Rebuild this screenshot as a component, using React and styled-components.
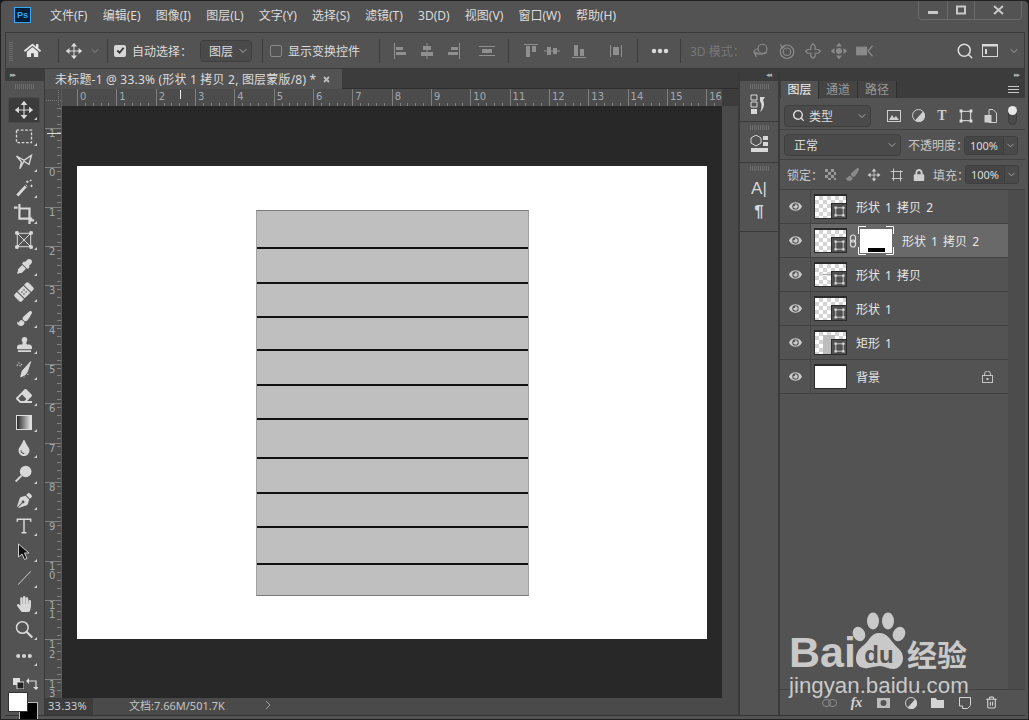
import React from 'react';
import styled, { createGlobalStyle } from 'styled-components';
import {
  FaHome, FaEyeDropper, FaBandAid, FaPaintBrush, FaStamp, FaEraser, FaTint,
  FaPenNib, FaHandPaper, FaEye, FaLock,
} from 'react-icons/fa';
import { Search, ChevronDown, Trash2 } from 'lucide-react';

const INCH = 39.33;

const Global = createGlobalStyle`
  html, body { margin: 0; padding: 0; background: #1a1a1a; overflow: hidden; }
  * { box-sizing: border-box; }
`;

const Window = styled.div`
  position: relative;
  width: 1029px;
  height: 720px;
  display: flex;
  flex-direction: column;
  overflow: hidden;
  background: #535353;
  border: 1px solid #222;
  border-radius: 5px 5px 0 0;
  font-family: "Noto Sans", "Noto Sans CJK SC", sans-serif;
  font-size: 12px;
  color: #dcdcdc;
`;

const TitleBar = styled.div`
  height: 31px;
  flex: none;
  display: flex;
  align-items: flex-start;
  padding-left: 13px;
`;

const PsLogo = styled.div`
  width: 17px;
  height: 16px;
  margin-top: 6px;
  margin-right: 19px;
  border: 1px solid #31a8ff;
  background: #001e36;
  color: #31a8ff;
  font: 700 9px/14px "Liberation Sans", sans-serif;
  text-align: center;
`;

const Menu = styled.nav`
  display: flex;
  gap: 15.2px;
  line-height: 30px;
`;

const WinControls = styled.div`
  display: flex;
  margin-left: auto;
  margin-right: 6px;
  height: 20px;
  margin-top: -1px;
  border: 1px solid #6a6a6a;
  border-top: none;
  border-radius: 0 0 4px 4px;
`;

const WinBtn = styled.div`
  width: ${(p) => p.$w}px;
  display: flex;
  align-items: center;
  justify-content: center;
  border-left: ${(p) => (p.$first ? 'none' : '1px solid #6a6a6a')};
`;

const OptionsBar = styled.div`
  height: 37px;
  flex: none;
  display: flex;
  align-items: center;
  margin: 0 3px 0 4px;
  border: 1px solid #3a3a3a;
`;

const OptGroup = styled.div`
  width: ${(p) => p.$w}px;
  height: 100%;
  flex: none;
  display: flex;
  align-items: center;
  padding-left: ${(p) => p.$pl || 0}px;
  gap: ${(p) => p.$gap || 0}px;
  color: ${(p) => (p.$muted ? '#777' : 'inherit')};
`;

const OptDivider = styled.div`
  width: 1px;
  height: 24px;
  flex: none;
  background: #3c3c3c;
`;

const Grip = styled.div`
  width: 4px;
  height: 20px;
  margin-right: 11px;
  background: repeating-linear-gradient(0deg, #6a6a6a 0 1px, transparent 1px 2px);
`;

const Check = styled.span`
  width: 12px;
  height: 12px;
  flex: none;
  display: inline-flex;
  align-items: center;
  justify-content: center;
  border-radius: 2px;
  background: ${(p) => (p.$on ? '#d6d6d6' : 'transparent')};
  border: ${(p) => (p.$on ? 'none' : '1px solid #8a8a8a')};
`;

const FixedLabel = styled.span`
  width: ${(p) => p.$w}px;
  flex: none;
  margin: ${(p) => p.$m || '0'};
  white-space: nowrap;
  color: ${(p) => p.$c || 'inherit'};
`;

const AlignSlot = styled.span`
  display: flex;
  flex: none;
  margin-left: ${(p) => p.$ml || 0}px;
`;

const SelectBox = styled.div`
  position: relative;
  width: ${(p) => p.$w}px;
  height: ${(p) => p.$h || 22}px;
  flex: none;
  display: flex;
  align-items: center;
  padding-left: ${(p) => p.$pl || 9}px;
  border: 1px solid #3f3f3f;
  border-radius: 4px;
  background: #4a4a4a;
  gap: 4px;
`;

const Caret = styled(ChevronDown)`
  position: absolute;
  right: 2px;
  top: 50%;
  margin-top: -6px;
  color: #a8a8a8;
`;

const Main = styled.div`
  flex: 1;
  min-height: 0;
  display: flex;
  margin: 0 3px 3px 4px;
  background: #3a3a3a;
  border-bottom: 1px solid #333;
`;

const ToolsCol = styled.aside`
  width: 40px;
  flex: none;
  display: flex;
  flex-direction: column;
  background: #535353;
  border-right: 1px solid #3a3a3a;
`;

const CollapseHead = styled.div`
  height: 12px;
  flex: none;
  background: #3c3c3c;
  display: flex;
  align-items: center;
  justify-content: ${(p) => (p.$between ? 'space-between' : 'flex-start')};
  padding: 0 ${(p) => p.$pr || 4}px 0 ${(p) => p.$pl || 5}px;
  color: #b0b0b0;
  font: 700 7px/12px "DejaVu Sans", sans-serif;
  letter-spacing: -1px;
`;

const ToolGrip = styled.div`
  height: 5px;
  width: 19px;
  flex: none;
  margin: 3px auto 8px;
  background: repeating-linear-gradient(90deg, #6c6c6c 0 1px, transparent 1px 2px);
`;

const ToolBtn = styled.div`
  position: relative;
  height: 26px;
  width: 32px;
  flex: none;
  margin-left: 3px;
  display: flex;
  align-items: center;
  justify-content: center;
  color: #d8d8d8;
  border-radius: 3px;
  background: ${(p) => (p.$active ? '#3b3b3b' : 'transparent')};
  box-shadow: ${(p) => (p.$active ? 'inset 0 0 0 1px #4a4a4a' : 'none')};
  &::after {
    content: '';
    position: absolute;
    right: 3px;
    bottom: 3px;
    border-left: 3px solid transparent;
    border-bottom: 3px solid #cfcfcf;
  }
`;

const SwatchRow = styled.div`
  display: flex;
  justify-content: space-between;
  padding: 8px 6px 0 8px;
  height: 22px;
  flex: none;
  margin-top: 1px;
`;

const Swatches = styled.div`
  position: relative;
  height: 30px;
  margin-left: 3px;
  flex: none;
`;

const Swatch = styled.div`
  position: absolute;
  left: ${(p) => p.$x}px;
  top: ${(p) => p.$y}px;
  width: ${(p) => p.$s}px;
  height: ${(p) => p.$s}px;
  background: ${(p) => p.$c};
  border: 1px solid ${(p) => (p.$c === '#fff' ? '#333' : '#bbb')};
  z-index: ${(p) => (p.$c === '#fff' ? 2 : 1)};
`;

const DocArea = styled.section`
  width: 693px;
  flex: none;
  display: flex;
  flex-direction: column;
  background: #3c3c3c;
`;

const TabStrip = styled.div`
  height: 20px;
  flex: none;
  display: flex;
  background: #3c3c3c;
  border-bottom: 1px solid #2e2e2e;
`;

const DocTab = styled.div`
  width: 297px;
  height: 20px;
  display: flex;
  align-items: center;
  padding-left: 10px;
  gap: 7px;
  white-space: pre;
  letter-spacing: 0.2px;
  background: #535353;
`;

const RulerRow = styled.div`
  height: 17px;
  flex: none;
  display: flex;
`;

const RulerCorner = styled.div`
  width: 17px;
  flex: none;
  background-color: #4c4c4c;
  background-image:
    repeating-linear-gradient(90deg, #7c7c7c 0 1px, transparent 1px 2px),
    repeating-linear-gradient(0deg, #7c7c7c 0 1px, transparent 1px 2px);
  background-size: 15px 1px, 1px 15px;
  background-position: 1px 11px, 13px 1px;
  background-repeat: no-repeat;
  border-right: 1px solid #5c5c5c;
`;

const HRuler = styled.div`
  position: relative;
  width: 660px;
  flex: none;
  display: flex;
  overflow: hidden;
  padding-left: 15px;
  background-color: #4c4c4c;
  background-image:
    repeating-linear-gradient(90deg, #808080 0 1px, transparent 1px ${INCH}px),
    repeating-linear-gradient(90deg, #808080 0 1px, transparent 1px ${INCH / 5}px);
  background-size: 100% 100%, 100% 3px;
  background-position: 15px 0, 15px bottom;
  background-repeat: no-repeat;
  font: 10px/16px "DejaVu Sans", sans-serif;
  color: #a3a9b0;
`;

const HTick = styled.span`
  width: ${INCH}px;
  flex: none;
  padding-left: 3px;
`;

const RulerMark = styled.div`
  position: absolute;
  left: 118px;
  top: 1px;
  width: 1px;
  height: 9px;
  background: #eee;
`;

const Body = styled.div`
  flex: 1;
  min-height: 0;
  display: flex;
`;

const VRuler = styled.div`
  position: relative;
  width: 17px;
  flex: none;
  padding-top: 22px;
  overflow: hidden;
  background-color: #4c4c4c;
  border-right: 1px solid #5c5c5c;
  background-image:
    repeating-linear-gradient(0deg, transparent 0 ${INCH / 5 - 1}px, #808080 ${INCH / 5 - 1}px ${INCH / 5}px),
    repeating-linear-gradient(180deg, #808080 0 1px, transparent 1px ${INCH}px);
  background-size: 4px 100%, 100% 100%;
  background-position: right 0, 0 22px;
  background-repeat: no-repeat;
  font: 10px/9.5px "DejaVu Sans", sans-serif;
  color: #a3a9b0;
`;

const VTick = styled.div`
  height: ${INCH}px;
  padding: 1px 0 0 4px;
  white-space: pre;
`;

const VMark = styled.div`
  position: absolute;
  left: 2px;
  top: 27px;
  width: 14px;
  height: 1px;
  background: #ddd;
`;

const Workspace = styled.main`
  width: 660px;
  flex: none;
  padding: 60px 0 0 15px;
  background: #282828;
`;

const Artboard = styled.div`
  width: 630px;
  height: 473px;
  padding: 44px 0 0 179px;
  background: #fff;
`;

const Sheet = styled.div`
  width: 273px;
  display: flex;
  flex-direction: column;
  border-top: 1px solid #7a7a7a;
  border-left: 1px solid #a0a0a0;
  border-right: 1px solid #a0a0a0;
  border-bottom: 1px solid #7a7a7a;
`;

const Slat = styled.div`
  height: ${(p) => p.$h}px;
  background: #bfbfbf;
  border-bottom: ${(p) => (p.$last ? 'none' : '2px solid #111')};
`;

const ScrollTrack = styled.div`
  flex: 1;
  background: #4a4a4a;
`;

const StatusBar = styled.footer`
  height: 17px;
  flex: none;
  display: flex;
  background: #4a4a4a;
  line-height: 16px;
  font-size: 11px;
`;

const Zoom = styled.div`
  width: 48px;
  padding-left: 3px;
  letter-spacing: 0.3px;
  background: #3c3c3c;
  color: #d0d0d0;
`;

const DocInfo = styled.div`
  width: 172px;
  padding-left: 36px;
  color: #c4c4c4;
`;

const ChevronCell = styled.div`
  width: 45px;
  color: #999;
`;

const Dock = styled.div`
  width: 38px;
  flex: none;
  margin-left: 2px;
  display: flex;
  flex-direction: column;
  background: #535353;
`;

const DockSection = styled.div`
  height: ${(p) => p.$h}px;
  flex: none;
  display: flex;
  flex-direction: column;
  align-items: center;
  gap: ${(p) => p.$gap || 0}px;
  border-bottom: 1px solid #3a3a3a;
  color: #d8d8d8;
`;

const DockGrip = styled(ToolGrip)`
  margin: 3px auto 5px;
`;

const DockGlyph = styled.span`
  font: ${(p) => p.$weight || 400} 17px/20px "Liberation Sans", sans-serif;
  color: #d8d8d8;
`;

const Panel = styled.div`
  flex: 1;
  margin-left: 2px;
  display: flex;
  flex-direction: column;
  background: #535353;
`;

const Tabs = styled.div`
  height: 17px;
  flex: none;
  display: flex;
  background: #3c3c3c;
  padding-left: 1px;
  position: relative;
`;

const Tab = styled.div`
  width: ${(p) => p.$w}px;
  height: ${(p) => (p.$active ? 18 : 17)}px;
  text-align: center;
  line-height: 17px;
  color: ${(p) => (p.$active ? '#f0f0f0' : '#9a9a9a')};
  background: ${(p) => (p.$active ? '#535353' : '#444')};
  border-right: 1px solid #2f2f2f;
  z-index: 1;
`;

const PanelMenu = styled.div`
  position: absolute;
  right: 6px;
  top: 5px;
  width: 11px;
  height: 8px;
  background: repeating-linear-gradient(180deg, #c8c8c8 0 1px, transparent 1px 3px);
`;

const PanelRow = styled.div`
  height: ${(p) => p.$h}px;
  flex: none;
  display: flex;
  align-items: center;
  padding: ${(p) => p.$pt || 0}px 5px 0 4px;
  border-bottom: 1px solid #414141;
`;

const IconSlot = styled.span`
  width: ${(p) => p.$w}px;
  flex: none;
  display: flex;
  justify-content: center;
  margin-left: ${(p) => p.$ml || 0}px;
  color: ${(p) => (p.$dim ? '#8a8a8a' : '#cfcfcf')};
`;

const SerifT = styled.span`
  font: 700 14px/14px "Liberation Serif", serif;
`;

const Toggle = styled.div`
  position: relative;
  width: 9px;
  height: 19px;
  margin-left: 6px;
  border: 1px solid #3d3d3d;
  border-radius: 5px;
  background: #4a4a4a;
  &::before {
    content: '';
    position: absolute;
    left: -1px;
    top: -1px;
    width: 9px;
    height: 9px;
    border-radius: 50%;
    background: #e8e8e8;
  }
`;

const NumBox = styled.div`
  width: 54px;
  height: 19px;
  flex: none;
  display: flex;
  margin-left: 5px;
  border: 1px solid #3f3f3f;
  border-radius: 3px;
  background: #4a4a4a;
  font-size: 11px;
  line-height: 17px;
`;

const NumValue = styled.span`
  width: 39px;
  text-align: center;
  background: #454545;
  border-right: 1px solid #3f3f3f;
`;

const NumCaret = styled.span`
  flex: 1;
  display: flex;
  align-items: center;
  justify-content: center;
  color: #a8a8a8;
`;

const Layers = styled.div`
  flex: 1;
  min-height: 0;
  display: flex;
`;

const LayerList = styled.div`
  width: 228px;
  flex: none;
  display: flex;
  flex-direction: column;
`;

const LayerRow = styled.div`
  height: 34px;
  flex: none;
  display: flex;
  align-items: center;
  border-bottom: 1px solid #414141;
`;

const EyeCell = styled.div`
  width: 31px;
  height: 100%;
  flex: none;
  display: flex;
  align-items: center;
  justify-content: center;
  border-right: 1px solid #464646;
  color: #c9c9c9;
`;

const LayerBody = styled.div`
  flex: 1;
  height: 100%;
  display: flex;
  align-items: center;
  padding-left: 3px;
  background: ${(p) => (p.$selected ? '#696969' : 'transparent')};
`;

const Thumb = styled.div`
  position: relative;
  width: 33px;
  height: 25px;
  flex: none;
  border-top: 2px solid #2b2b2b;
  border-left: 1px solid #2b2b2b;
  border-bottom: 1px solid #2b2b2b;
  border-right: 1px solid #2b2b2b;
  background: ${(p) => (p.$plain
    ? '#fff'
    : 'conic-gradient(#d4d4d4 25%, #fff 0 50%, #d4d4d4 0 75%, #fff 0) 0 0 / 8px 8px')};
`;

const ThumbShape = styled.div`
  position: absolute;
  left: 8px;
  top: 3px;
  width: 12px;
  height: 19px;
  background: #bdbdbd;
`;

const ThumbLine = styled.div`
  position: absolute;
  left: 8px;
  top: 10px;
  width: 22px;
  height: 1px;
  background: #a8a8a8;
`;

const ThumbBadge = styled.div`
  position: absolute;
  right: 0;
  bottom: 0;
  width: 15px;
  height: 15px;
  display: flex;
  align-items: center;
  justify-content: center;
  background: #505050;
  border-top: 1px solid #2b2b2b;
  border-left: 1px solid #2b2b2b;
`;

const LayerName = styled.span`
  margin-left: ${(p) => p.$ml || 9}px;
  white-space: pre;
  word-spacing: 2px;
  color: #e6e6e6;
  font-size: 12px;
`;

const MaskFrame = styled.div`
  position: relative;
  width: 36px;
  height: 29px;
  flex: none;
  margin-left: 1px;
  padding: 3px 2px 2px;
`;

const MaskCorners = styled.svg`
  position: absolute;
  left: 0;
  top: 0;
`;

const MaskFill = styled.div`
  width: 100%;
  height: 100%;
  display: flex;
  align-items: flex-end;
  justify-content: center;
  background: #fff;
`;

const MaskBar = styled.div`
  width: 17px;
  height: 4px;
  margin-bottom: 1px;
  background: #000;
`;

const LayerLock = styled.div`
  margin-left: auto;
  margin-right: 15px;
  color: #c4c4c4;
  display: flex;
`;

const LayersGutter = styled.div`
  flex: 1;
  background: #4c4c4c;
`;

const PanelFooter = styled.div`
  height: 26px;
  flex: none;
  display: flex;
  align-items: center;
  padding-left: 36px;
  border-top: 1px solid #414141;
  color: #d4d4d4;
`;

const FooterIcon = styled.span`
  width: 27px;
  flex: none;
  display: flex;
  justify-content: center;
  color: ${(p) => (p.$dim ? '#8a8a8a' : 'inherit')};
  font: italic 700 14px/16px "Liberation Serif", serif;
`;

const Watermark = styled.div`
  position: absolute;
  left: 788px;
  top: 608px;
  width: 190px;
  pointer-events: none;
  color: #c9c9c9;
`;

const MarkTop = styled.div`
  display: flex;
  align-items: flex-end;
  height: 62px;
`;

const MarkBai = styled.span`
  font: 700 43px/38px "Liberation Sans", sans-serif;
  width: 63px;
  flex: none;
`;

const MarkPaw = styled.svg`
  flex: none;
`;

const MarkCn = styled.span`
  font: 700 30px/36px "Noto Sans CJK SC", sans-serif;
  margin-left: 1px;
  white-space: nowrap;
`;

const MarkUrl = styled.div`
  font: 22.3px/24px "Liberation Sans", sans-serif;
  white-space: nowrap;
  margin-top: 3px;
`;

const I = ({ s = 20, vb = 24, children, fill = 'none', stroke = 'currentColor', sw = 1.6 }) => (
  <svg width={s} height={s} viewBox={`0 0 ${vb} ${vb}`} fill={fill} stroke={stroke} strokeWidth={sw}>
    {children}
  </svg>
);

const MoveGlyph = ({ s = 20 }) => (
  <I s={s} sw={1.4}>
    <path d="M12 4v16M4 12h16" />
    <path d="M12 1l4 5H8zM12 23l-4-5h8zM1 12l5-4v8zM23 12l-5 4V8z" fill="currentColor" stroke="none" />
  </I>
);

const Align = ({ d }) => (
  <svg width="18" height="18" viewBox="0 0 18 18" fill="#8f8f8f" stroke="none"><path d={d} /></svg>
);

const ALIGN = [
  { d: 'M2 1h1v16H2zM4 5h7v3H4zM4 10h10v3H4z', ml: 0 },
  { d: 'M8.5 1h1v16h-1zM5 4h8v4H5zM3 10h12v4H3z', ml: 8 },
  { d: 'M15 1h1v16h-1zM7 5h7v3H7zM4 10h10v3H4z', ml: 8 },
  { d: 'M1 4h16v1H1zM4 7h10v4H4zM1 13h16v1H1z', ml: 16 },
];
const DIST = [
  { d: 'M2 2h14v1H2zM4 4h4v11H4zM10 4h4v6h-4z', ml: 0 },
  { d: 'M1 8.5h16v1H1zM4 5h4v8H4zM10 6h4v6h-4z', ml: 3 },
  { d: 'M2 15h14v1H2zM4 3h4v11H4zM10 7h4v7h-4z', ml: 9 },
  { d: 'M3 3h1v12H3zM14 3h1v12h-1zM6 5h6v8H6z', ml: 19 },
];

const TOOLS = [
  <MoveGlyph key="move" />,
  <I s={20}><rect x="3" y="5" width="18" height="15" strokeDasharray="3.2 2" /></I>,
  <I s={20}><path d="M3 5l9 5 9-6-3 11-6-4-5 9 2-8z" /></I>,
  <I s={20} sw={1.2}><path d="M4 21L14 10" strokeWidth="3.4" /><path d="M16 3v3M14.5 4.5h3M21 8v3M19.5 9.5h3M20 2v2M19 3h2M14 8l2 2" /></I>,
  <I s={22} sw={2.4}><path d="M1 5h4M7 1v16h14M7 6h11v17M18 19h5" /></I>,
  <I s={20} sw={1.2}><path d="M4 4h16v16H4zM4 4l16 16M20 4L4 20" /><path d="M2 2h3v3H2zM19 2h3v3h-3zM2 19h3v3H2zM19 19h3v3h-3z" fill="currentColor" /></I>,
  <FaEyeDropper key="dr" size={15} />,
  <FaBandAid key="ba" size={20} style={{ transform: 'rotate(-45deg)' }} />,
  <FaPaintBrush key="br" size={15} />,
  <FaStamp key="st" size={15} />,
  <I s={20} sw={1.2}><path d="M20 2L10 13l-2 7c4-1 7-3 8-6z" fill="currentColor" /><path d="M3 6l5 1M5 3l5 3M16 18l2-2M12 21l1-1" strokeDasharray="2 1.5" /></I>,
  <FaEraser key="er" size={16} />,
  <svg key="gr" width="16" height="15" viewBox="0 0 16 15"><defs><linearGradient id="gr" x1="0" x2="1"><stop offset="0" stopColor="#222" /><stop offset="1" stopColor="#eee" /></linearGradient></defs><rect x=".5" y=".5" width="15" height="14" fill="url(#gr)" stroke="#ddd" /></svg>,
  <FaTint key="ti" size={16} />,
  <I s={20} fill="none"><circle cx="14" cy="9" r="7" fill="currentColor" stroke="none" /><path d="M9 14l-7 7" strokeWidth="2.2" /></I>,
  <FaPenNib key="pn" size={15} />,
  <I s={20} sw={1.8}><path d="M4 7V4h16v3M12 4v16M9 20h6" /></I>,
  <svg key="mp" width="14" height="18" viewBox="0 0 14 18"><path d="M1.5 1v13l3.5-3 2.5 5.5 2.5-1L7.5 10H12z" fill="#111" stroke="#ccc" strokeWidth="1" /></svg>,
  <I s={20} sw={1.1}><path d="M5 20L20 4" /></I>,
  <FaHandPaper key="hp" size={16} />,
  <I s={20} sw={1.8}><circle cx="10" cy="9" r="7" /><path d="M15 14l7 7" strokeWidth="2.6" /></I>,
  <I s={20} fill="currentColor" stroke="none"><circle cx="5" cy="12" r="2.4" /><circle cx="12" cy="12" r="2.4" /><circle cx="19" cy="12" r="2.4" /></I>,
];

const Handles = ({ s = 11 }) => (
  <I s={s} sw={1.8} stroke="#dcdcdc">
    <rect x="4" y="4" width="16" height="16" />
    <path d="M1 1h5v5H1zM18 1h5v5h-5zM1 18h5v5H1zM18 18h5v5h-5z" fill="#dcdcdc" stroke="none" />
  </I>
);

const Lockish = () => (
  <svg width="11" height="12" viewBox="0 0 11 12">
    <rect x=".5" y="4.5" width="10" height="7" fill="none" stroke="#c4c4c4" />
    <path d="M2.5 4.5V3a3 3 0 0 1 6 0v1.5" fill="none" stroke="#c4c4c4" />
    <rect x="4.5" y="7" width="2" height="2" fill="#c4c4c4" />
  </svg>
);

const LAYERS = [
  { name: '形状 1 拷贝 2' },
  { name: '形状 1 拷贝 2', selected: true },
  { name: '形状 1 拷贝', line: true },
  { name: '形状 1' },
  { name: '矩形 1', bar: true },
  { name: '背景', plain: true },
];

const MENU = ['文件(F)', '编辑(E)', '图像(I)', '图层(L)', '文字(Y)', '选择(S)', '滤镜(T)', '3D(D)', '视图(V)', '窗口(W)', '帮助(H)'];
const SLATS = [38, 35, 34, 33, 35, 34, 39, 35, 34, 37, 30];
const V_LABELS = ['1', '0', '1', '2', '3', '4', '5', '6', '7', '8', '9', '1\n0', '1\n1', '1\n2', '1\n3'];

export default function App() {
  return (
    <>
      <Global />
      <Window>
        <TitleBar>
          <PsLogo>Ps</PsLogo>
          <Menu>{MENU.map((m) => <span key={m}>{m}</span>)}</Menu>
          <WinControls>
            <WinBtn $w={28} $first><svg width="10" height="10" viewBox="0 0 10 10"><rect y="6" width="10" height="3" fill="#c8c8c8" /></svg></WinBtn>
            <WinBtn $w={27}><svg width="10" height="10" viewBox="0 0 10 10"><rect x="1" y="1.5" width="8" height="7" fill="none" stroke="#c8c8c8" strokeWidth="2" /></svg></WinBtn>
            <WinBtn $w={47}><svg width="11" height="10" viewBox="0 0 11 10"><path d="M1 1l9 8M10 1l-9 8" stroke="#c8c8c8" strokeWidth="2" /></svg></WinBtn>
          </WinControls>
        </TitleBar>

        <OptionsBar>
          <OptGroup $w={52} $pl={3}>
            <Grip />
            <FaHome size={17} color="#e4e4e4" />
          </OptGroup>
          <OptDivider />
          <OptGroup $w={48} $pl={6} $gap={6}>
            <MoveGlyph s={18} />
            <ChevronDown size={12} color="#8c8c8c" />
          </OptGroup>
          <OptDivider />
          <OptGroup $w={154} $pl={6}>
            <Check $on>
              <svg width="9" height="9" viewBox="0 0 10 10"><path d="M1.5 5l2.5 2.5L8.5 2" fill="none" stroke="#333" strokeWidth="2" /></svg>
            </Check>
            <FixedLabel $w={55} $m="0 13px 0 6px">自动选择：</FixedLabel>
            <SelectBox $w={52} $pl={8}>图层<Caret size={12} /></SelectBox>
          </OptGroup>
          <OptDivider />
          <OptGroup $w={116} $pl={7} $gap={6}>
            <Check />
            <span>显示变换控件</span>
          </OptGroup>
          <OptDivider />
          <OptGroup $w={128} $pl={12}>
            {ALIGN.map((a) => <AlignSlot key={a.d} $ml={a.ml}><Align d={a.d} /></AlignSlot>)}
          </OptGroup>
          <OptDivider />
          <OptGroup $w={128} $pl={13}>
            {DIST.map((a) => <AlignSlot key={a.d} $ml={a.ml}><Align d={a.d} /></AlignSlot>)}
          </OptGroup>
          <OptDivider />
          <OptGroup $w={42} $pl={13}>
            <I s={18} fill="#d8d8d8" stroke="none"><circle cx="4" cy="12" r="3" /><circle cx="12" cy="12" r="3" /><circle cx="20" cy="12" r="3" /></I>
          </OptGroup>
          <OptDivider />
          <OptGroup $w={268} $pl={9} $muted>
            <FixedLabel $w={46} $m="0 12px 0 0">3D 模式：</FixedLabel>
            <IconSlot $w={26} $dim><I s={18}><circle cx="14" cy="9" r="6" /><path d="M8 9c-4 1-6 3-5 5 2 3 11 3 17 0M6 20l-3-6 6 1" /></I></IconSlot>
            <IconSlot $w={26} $dim><I s={18}><circle cx="12" cy="13" r="9" /><circle cx="12" cy="13" r="5" /><path d="M3 3l3 5 4-4" /></I></IconSlot>
            <IconSlot $w={26} $dim><I s={18}><path d="M12 2l3 4v4h4l3 2-3 3h-4v4l-3 3-3-3v-4H5l-3-3 3-2h4V6z" /></I></IconSlot>
            <IconSlot $w={26} $dim><I s={18} fill="currentColor" stroke="none"><circle cx="12" cy="12" r="4" /><path d="M12 1l4 5H8zM12 23l-4-5h8zM1 12l5-4v8zM23 12l-5 4V8z" /></I></IconSlot>
            <IconSlot $w={26} $dim><I s={18}><rect x="1" y="7" width="13" height="10" fill="currentColor" /><path d="M22 5l-6 7 6 7" /></I></IconSlot>
          </OptGroup>
          <IconSlot $w={18} $ml={7}><Search size={18} color="#dcdcdc" strokeWidth={2} /></IconSlot>
          <IconSlot $w={16} $ml={8}>
            <svg width="16" height="13" viewBox="0 0 16 13"><rect x=".5" y=".5" width="15" height="12" fill="none" stroke="#d8d8d8" /><rect x=".5" y=".5" width="15" height="2" fill="#d8d8d8" /><rect x="3" y="5" width="2" height="5" fill="#d8d8d8" /></svg>
          </IconSlot>
          <IconSlot $w={12} $ml={10}><ChevronDown size={12} color="#a8a8a8" /></IconSlot>
        </OptionsBar>

        <Main>
          <ToolsCol>
            <CollapseHead>▸▸</CollapseHead>
            <ToolGrip />
            {TOOLS.map((icon, i) => (
              <ToolBtn key={i} $active={i === 0}>{icon}</ToolBtn>
            ))}
            <SwatchRow>
              <svg width="11" height="11" viewBox="0 0 11 11"><rect x="0" y="0" width="7" height="7" fill="#ddd" /><rect x="4" y="4" width="7" height="7" fill="#222" stroke="#ddd" /></svg>
              <svg width="12" height="12" viewBox="0 0 12 12"><path d="M1 3h9v7" fill="none" stroke="#ddd" strokeWidth="1.2" /><path d="M0 3l3-3v6zM10 12l-3-3h6z" fill="#ddd" /></svg>
            </SwatchRow>
            <Swatches>
              <Swatch $x={0} $y={0} $s={20} $c="#fff" />
              <Swatch $x={11} $y={10} $s={19} $c="#000" />
            </Swatches>
          </ToolsCol>

          <DocArea>
            <TabStrip>
              <DocTab>
                <span>未标题-1 @ 33.3% (形状 1 拷贝 2, 图层蒙版/8) *</span>
                <svg width="7" height="7" viewBox="0 0 7 7"><path d="M1 1l5 5M6 1l-5 5" stroke="#bbb" strokeWidth="1.8" /></svg>
              </DocTab>
            </TabStrip>
            <RulerRow>
              <RulerCorner />
              <HRuler>
                {Array.from({ length: 17 }, (_, i) => <HTick key={i}>{i}</HTick>)}
                <RulerMark />
              </HRuler>
            </RulerRow>
            <Body>
              <VRuler>
                {V_LABELS.map((l, i) => <VTick key={i}>{l}</VTick>)}
                <VMark />
              </VRuler>
              <Workspace>
                <Artboard>
                  <Sheet>
                    {SLATS.map((h, i) => <Slat key={i} $h={h} $last={i === SLATS.length - 1} />)}
                  </Sheet>
                </Artboard>
              </Workspace>
              <ScrollTrack />
            </Body>
            <StatusBar>
              <Zoom>33.33%</Zoom>
              <DocInfo>文档:7.66M/501.7K</DocInfo>
              <ChevronCell>
                <svg width="6" height="10" viewBox="0 0 6 10"><path d="M1 1l4 4-4 4" fill="none" stroke="#a0a0a0" /></svg>
              </ChevronCell>
            </StatusBar>
          </DocArea>

          <Dock>
            <CollapseHead $pl={26}>◂◂</CollapseHead>
            <DockSection $h={41}>
              <DockGrip />
              <svg width="18" height="20" viewBox="0 0 18 20"><path d="M1 1h6v5H1zM1 8h6v5H1z" fill="none" stroke="#d8d8d8" /><rect x="1" y="15" width="6" height="5" fill="#d8d8d8" /><path d="M10 3h5l-2 3c2 4 1 9-3 12 2-4 2-8 0-11z" fill="#d8d8d8" /></svg>
            </DockSection>
            <DockSection $h={41}>
              <DockGrip />
              <svg width="19" height="19" viewBox="0 0 19 19"><path d="M6 0l5 3v5l-5 3-5-3V3z" fill="none" stroke="#d8d8d8" /><path d="M13 1h5v4h-5zM13 7h5v4h-5zM1 13h17v4H1z" fill="#d8d8d8" /></svg>
            </DockSection>
            <DockSection $h={69} $gap={3}>
              <DockGrip />
              <DockGlyph>A|</DockGlyph>
              <DockGlyph $weight={700}>¶</DockGlyph>
            </DockSection>
          </Dock>

          <Panel>
            <CollapseHead $between $pr={6} $pl={225}><span /><span>▸▸</span></CollapseHead>
            <Tabs>
              <Tab $w={38} $active>图层</Tab>
              <Tab $w={39}>通道</Tab>
              <Tab $w={39}>路径</Tab>
              <PanelMenu />
            </Tabs>
            <PanelRow $h={32} $pt={4}>
              <SelectBox $w={87} $pl={7}>
                <Search size={13} color="#e0e0e0" strokeWidth={2.6} />类型<Caret size={12} />
              </SelectBox>
              <IconSlot $w={24} $ml={11}>
                <svg width="14" height="12" viewBox="0 0 14 12"><rect x=".5" y=".5" width="13" height="11" fill="none" stroke="#cfcfcf" /><path d="M2 10l3-5 2 3 2-2 3 4z" fill="#cfcfcf" /></svg>
              </IconSlot>
              <IconSlot $w={24}><svg width="13" height="13" viewBox="0 0 13 13"><circle cx="6.5" cy="6.5" r="6" fill="#555" stroke="#cfcfcf" /><path d="M11 2.5A6 6 0 0 1 3 11.5z" fill="#cfcfcf" /></svg></IconSlot>
              <IconSlot $w={24}><SerifT>T</SerifT></IconSlot>
              <IconSlot $w={24}><Handles s={14} /></IconSlot>
              <IconSlot $w={24}><svg width="13" height="14" viewBox="0 0 13 14"><path d="M5 .5h4l3.5 3.5v9.5H5z" fill="none" stroke="#cfcfcf" /><rect x=".5" y="6" width="7" height="7.5" fill="#cfcfcf" /></svg></IconSlot>
              <Toggle />
            </PanelRow>
            <PanelRow $h={30} $pt={1}>
              <SelectBox $w={117} $pl={9} $h={22}>正常<Caret size={12} /></SelectBox>
              <FixedLabel $w={51} $m="0 0 0 7px" $c="#c8c8c8">不透明度：</FixedLabel>
              <NumBox><NumValue>100%</NumValue><NumCaret><ChevronDown size={11} /></NumCaret></NumBox>
            </PanelRow>
            <PanelRow $h={30}>
              <FixedLabel $w={29} $m="0 0 0 3px" $c="#c8c8c8">锁定：</FixedLabel>
              <IconSlot $w={22} $dim $ml={3}><svg width="11" height="11" viewBox="0 0 11 11"><path d="M0 0h3v3H0zM6 0h3v3H6zM3 3h3v3H3zM9 3h2v3H9zM0 6h3v3H0zM6 6h3v3H6zM3 9h3v2H3zM9 9h2v2H9z" fill="#9a9a9a" /></svg></IconSlot>
              <IconSlot $w={22} $dim><FaPaintBrush size={13} /></IconSlot>
              <IconSlot $w={22}><MoveGlyph s={14} /></IconSlot>
              <IconSlot $w={23}><I s={14} sw={1.6}><path d="M1 6h21M6 1v21M18 4v14H3M21 18h-3v5" /></I></IconSlot>
              <IconSlot $w={22}><FaLock size={12} /></IconSlot>
              <FixedLabel $w={27} $m="0 0 0 3px" $c="#c8c8c8">填充：</FixedLabel>
              <NumBox><NumValue>100%</NumValue><NumCaret><ChevronDown size={11} /></NumCaret></NumBox>
            </PanelRow>
            <Layers>
              <LayerList>
                {LAYERS.map((l, i) => (
                  <LayerRow key={i}>
                    <EyeCell><FaEye size={13} /></EyeCell>
                    <LayerBody $selected={l.selected}>
                      <Thumb $plain={l.plain}>
                        {l.bar && <ThumbShape />}
                        {l.line && <ThumbLine />}
                        {!l.plain && <ThumbBadge><Handles s={11} /></ThumbBadge>}
                      </Thumb>
                      {l.selected && (
                        <>
                          <svg width="8" height="14" viewBox="0 0 8 14" style={{ marginLeft: 2 }}><rect x="1.5" y="1" width="5" height="7" rx="2.5" fill="none" stroke="#ddd" strokeWidth="1.2" /><rect x="1.5" y="6" width="5" height="7" rx="2.5" fill="none" stroke="#ddd" strokeWidth="1.2" /></svg>
                          <MaskFrame>
                            <MaskCorners width="36" height="29" viewBox="0 0 36 29" fill="none" stroke="#fff">
                              <path d="M8 .5H.5V8M28 .5h7.5V8M8 28.5H.5V21M28 28.5h7.5V21" />
                            </MaskCorners>
                            <MaskFill><MaskBar /></MaskFill>
                          </MaskFrame>
                        </>
                      )}
                      <LayerName $ml={l.selected ? 8 : 9}>{l.name}</LayerName>
                      {l.plain && <LayerLock><Lockish /></LayerLock>}
                    </LayerBody>
                  </LayerRow>
                ))}
              </LayerList>
              <LayersGutter />
            </Layers>
            <PanelFooter>
              <FooterIcon $dim><svg width="15" height="8" viewBox="0 0 15 8"><rect x=".5" y=".5" width="8" height="7" rx="3.5" fill="none" stroke="#8a8a8a" /><rect x="6.5" y=".5" width="8" height="7" rx="3.5" fill="none" stroke="#8a8a8a" /></svg></FooterIcon>
              <FooterIcon>fx</FooterIcon>
              <FooterIcon><svg width="13" height="10" viewBox="0 0 13 10"><rect width="13" height="10" fill="#bdbdbd" /><circle cx="6.5" cy="5" r="3" fill="#555" /></svg></FooterIcon>
              <FooterIcon><svg width="12" height="12" viewBox="0 0 13 13"><circle cx="6.5" cy="6.5" r="6" fill="#555" stroke="#d4d4d4" /><path d="M11 2.5A6 6 0 0 1 3 11.5z" fill="#d4d4d4" /></svg></FooterIcon>
              <FooterIcon><svg width="13" height="10" viewBox="0 0 13 10"><path d="M0 0h5l1 2h7v8H0z" fill="#d4d4d4" /></svg></FooterIcon>
              <FooterIcon><svg width="12" height="12" viewBox="0 0 12 12"><path d="M.5.5h11v8l-3 3H3.5V9H.5z" fill="none" stroke="#d4d4d4" /></svg></FooterIcon>
              <FooterIcon><Trash2 size={13} /></FooterIcon>
            </PanelFooter>
          </Panel>
        </Main>

        <Watermark>
          <MarkTop>
            <MarkBai>Bai</MarkBai>
            <MarkPaw width="54" height="62" viewBox="0 0 54 62">
              <ellipse cx="21" cy="12" rx="6" ry="8.5" fill="#c9c9c9" />
              <ellipse cx="36" cy="12" rx="6" ry="8.5" fill="#c9c9c9" />
              <ellipse cx="7" cy="25" rx="6" ry="7.5" fill="#c9c9c9" transform="rotate(-25 7 25)" />
              <ellipse cx="47" cy="25" rx="6" ry="7.5" fill="#c9c9c9" transform="rotate(25 47 25)" />
              <path d="M27 24C19 24 17 32 12 36C6 40 4 45 4 50C4 57 10 60 16 59C21 58 25 57 28 57C32 57 36 60 41 60C47 60 51 55 51 49C51 43 47 40 43 36C39 32 36 24 27 24Z" fill="#c9c9c9" />
              <text x="27" y="54" textAnchor="middle" fontFamily="Liberation Sans" fontWeight="700" fontSize="24" fill="#535353">du</text>
            </MarkPaw>
            <MarkCn>经验</MarkCn>
          </MarkTop>
          <MarkUrl>jingyan.baidu.com</MarkUrl>
        </Watermark>
      </Window>
    </>
  );
}
